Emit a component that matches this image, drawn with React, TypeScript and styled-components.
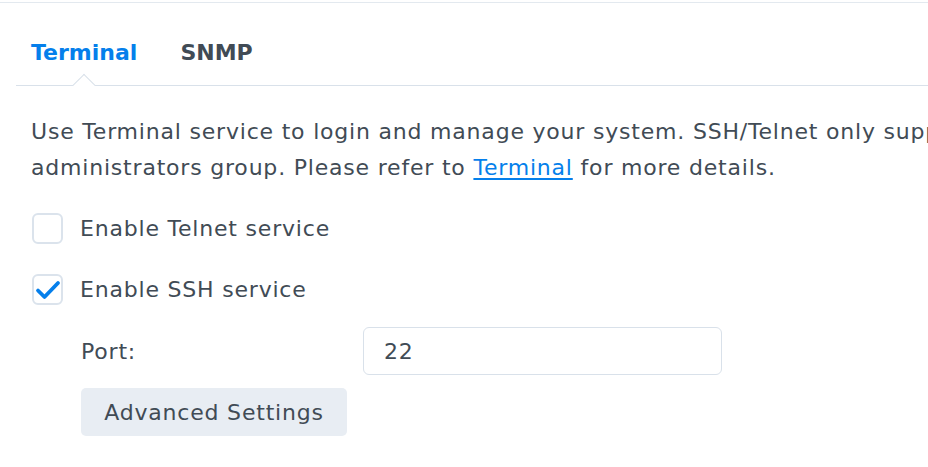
import React from 'react';
import styled, { createGlobalStyle } from 'styled-components';

const GlobalStyle = createGlobalStyle`
  html, body {
    margin: 0;
    padding: 0;
    background: #fff;
    overflow: hidden;
  }
  body {
    font-family: "DejaVu Sans", Verdana, sans-serif;
    color: #414b55;
  }
`;

const Page = styled.div`
  width: 928px;
  height: 467px;
  overflow: hidden;
  border-top: 1px solid #e3e9ef;
  margin-top: 2px;
  box-sizing: border-box;
`;

const TabBar = styled.div`
  display: flex;
  gap: 43px;
  margin: 0 0 0 16px;
  padding: 0 0 0 15px;
  height: 83px;
  box-sizing: border-box;
  border-bottom: 1px solid #d9e1ea;
`;

const Tab = styled.div<{ $active?: boolean }>`
  position: relative;
  padding-top: 35px;
  font-size: 22px;
  font-weight: bold;
  line-height: 30px;
  color: ${({ $active }) => ($active ? '#057feb' : '#414b55')};
`;

const Caret = styled.span`
  position: absolute;
  left: 50%;
  bottom: -8px;
  width: 16px;
  height: 16px;
  margin-left: -8px;
  box-sizing: border-box;
  background: #fff;
  border-left: 1px solid #d9e1ea;
  border-top: 1px solid #d9e1ea;
  transform: rotate(45deg);
`;

const Content = styled.div`
  padding: 28px 0 0 31px;
  font-size: 22px;
  letter-spacing: 0.8px;
`;

const Description = styled.p`
  margin: 0;
  line-height: 36px;
  white-space: nowrap;
`;

const Link = styled.a`
  color: #057feb;
  text-decoration: underline;
  text-underline-offset: 3px;
`;

const CheckRow = styled.label<{ $first?: boolean }>`
  display: flex;
  align-items: center;
  gap: 17px;
  height: 31px;
  margin-top: ${({ $first }) => ($first ? '27px' : '30px')};
`;

const Box = styled.span`
  display: flex;
  align-items: center;
  justify-content: center;
  margin-left: 1px;
  width: 31px;
  height: 31px;
  box-sizing: border-box;
  border: 2px solid #dbe3ec;
  border-radius: 6px;
  background: #fff;
`;

const SubSection = styled.div`
  padding-left: 50px;
`;

const FieldRow = styled.div`
  display: grid;
  grid-template-columns: 282px 359px;
  align-items: center;
  margin-top: 22px;
`;

const Input = styled.div`
  height: 48px;
  box-sizing: border-box;
  border: 1px solid #d9e1ea;
  border-radius: 6px;
  padding: 0 20px;
  display: flex;
  align-items: center;
`;

const Button = styled.div`
  display: inline-flex;
  align-items: center;
  justify-content: center;
  margin-top: 13px;
  width: 266px;
  height: 48px;
  border-radius: 5px;
  background: #e8edf3;
`;

const Check = () => (
  <svg width="26" height="22" viewBox="0 0 26 22">
    <path d="M3 11.5 L9.5 18 L23 4" fill="none" stroke="#057feb" strokeWidth="3.8" strokeLinecap="round" strokeLinejoin="round" />
  </svg>
);

export default function App() {
  return (
    <>
      <GlobalStyle />
      <Page>
        <TabBar>
          <Tab $active>
            Terminal
            <Caret />
          </Tab>
          <Tab>SNMP</Tab>
        </TabBar>
        <Content>
          <Description>
            Use Terminal service to login and manage your system. SSH/Telnet only supports users belonging to the
            <br />
            administrators group. Please refer to <Link>Terminal</Link> for more details.
          </Description>
          <CheckRow $first>
            <Box />
            Enable Telnet service
          </CheckRow>
          <CheckRow>
            <Box>
              <Check />
            </Box>
            Enable SSH service
          </CheckRow>
          <SubSection>
            <FieldRow>
              <span>Port:</span>
              <Input>22</Input>
            </FieldRow>
            <Button>Advanced Settings</Button>
          </SubSection>
        </Content>
      </Page>
    </>
  );
}
